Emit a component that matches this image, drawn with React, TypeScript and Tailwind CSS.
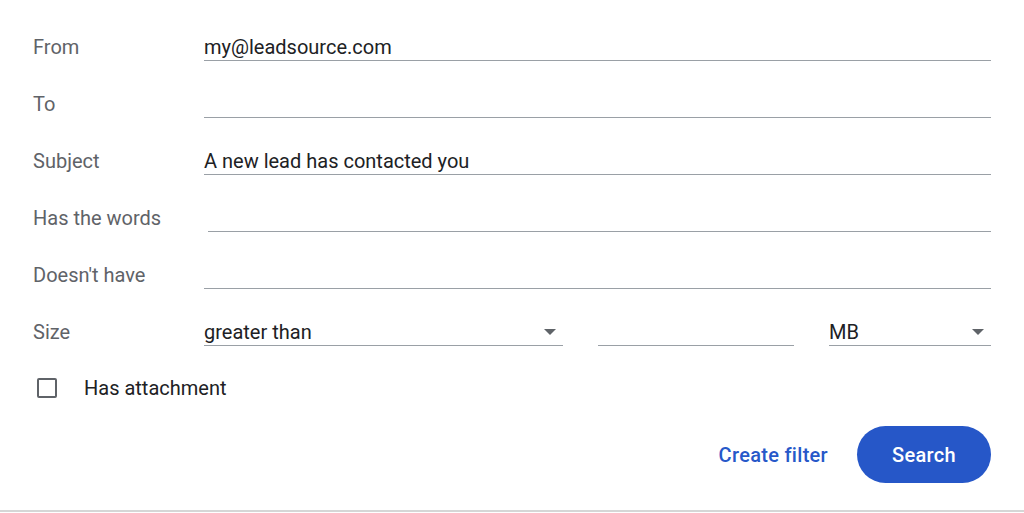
import React from "react";

function Caret() {
    return (
        <svg width="12" height="6" viewBox="0 0 12 6" className="shrink-0">
            <path d="M0 0 L12 0 L6 6 Z" fill="#5f6368" />
        </svg>
    );
}

function Row({ label, value, offset }: { label: string; value?: string; offset?: boolean }) {
    return (
        <div className="flex items-end h-[57px]">
            <div className="w-[171px] h-[28px] leading-[28px] text-[#5f6368]">{label}</div>
            <div
                className={`flex-1 h-[28px] leading-[28px] border-b border-[#9aa0a6] text-[#202124] ${offset ? "ml-[4px]" : ""}`}
            >
                {value}
            </div>
        </div>
    );
}

export default function App() {
    return (
        <div
            className="w-full h-[513px] bg-white flex flex-col text-[20px]"
            style={{ fontFamily: "Roboto, 'Liberation Sans', sans-serif" }}
        >
            <div className="px-[33px] pt-[4px]">
                <Row label="From" value="my@leadsource.com" />
                <Row label="To" />
                <Row label="Subject" value="A new lead has contacted you" />
                <Row label="Has the words" offset />
                <Row label="Doesn't have" />
                <div className="flex items-end h-[57px]">
                    <div className="w-[171px] h-[28px] leading-[28px] text-[#5f6368]">Size</div>
                    <div className="w-[359px] h-[28px] border-b border-[#9aa0a6] flex items-center justify-between pr-[7px] text-[#202124]">
                        <span className="leading-[28px]">greater than</span>
                        <Caret />
                    </div>
                    <div className="w-[196px] h-[28px] ml-[35px] border-b border-[#9aa0a6]" />
                    <div className="flex-1 h-[28px] ml-[35px] border-b border-[#9aa0a6] flex items-center justify-between pr-[7px] text-[#202124]">
                        <span className="leading-[28px]">MB</span>
                        <Caret />
                    </div>
                </div>
                <div className="flex items-center h-[40px] mt-[22px]">
                    <div className="w-[20px] h-[20px] ml-[4px] border-2 border-[#5f6368] rounded-[2px]" />
                    <span className="ml-[27px] text-[#202124]">Has attachment</span>
                </div>
                <div className="flex items-center justify-end mt-[18px]">
                    <button className="text-[#2758c9] font-medium text-[20px] tracking-[0.3px] mr-[29px]">Create filter</button>
                    <button className="h-[57px] w-[134px] rounded-full bg-[#2657c8] text-white font-medium tracking-[0.3px]">
                        Search
                    </button>
                </div>
            </div>
            <div className="mt-auto mb-[1px] h-[2px] bg-[#d6d6d6]" />
        </div>
    );
}
